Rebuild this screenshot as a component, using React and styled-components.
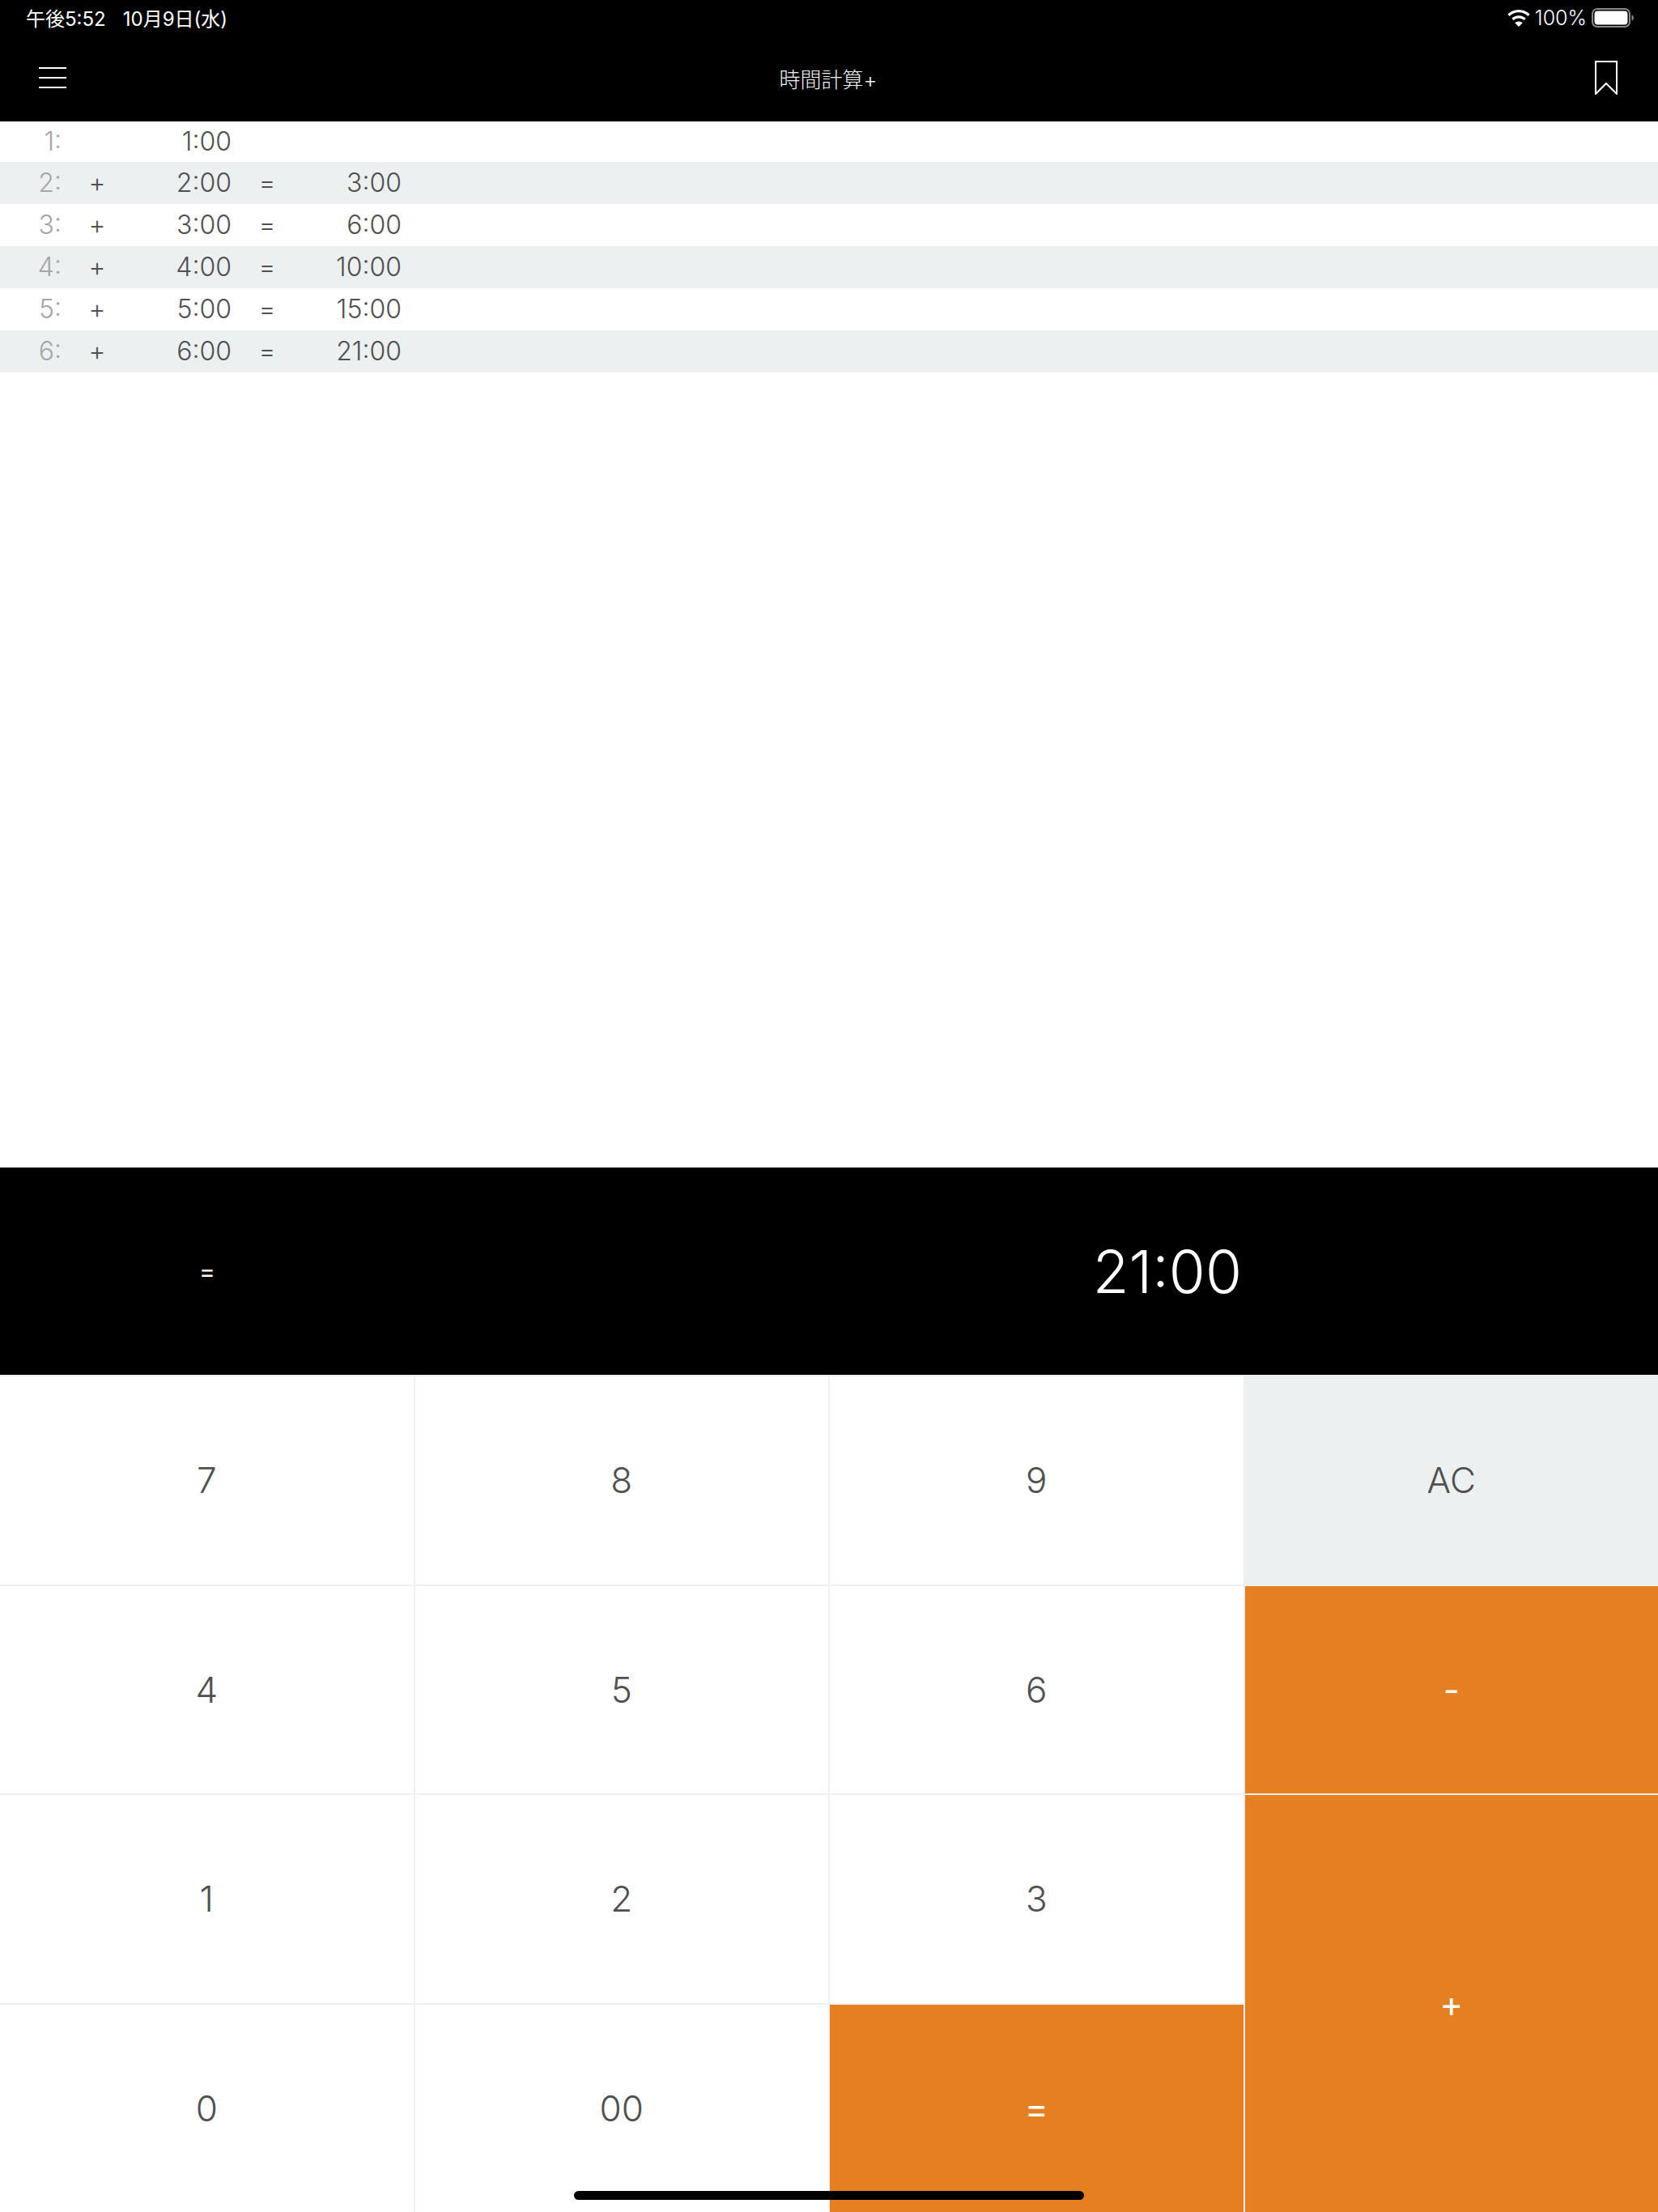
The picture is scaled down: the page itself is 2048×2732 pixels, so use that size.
import styled, { createGlobalStyle } from 'styled-components'

const GlobalStyle = createGlobalStyle`
    html, body {
        margin: 0;
        padding: 0;
        background: #ffffff;
    }
    * {
        box-sizing: border-box;
    }
`

const Page = styled.div`
    width: 2048px;
    height: 2732px;
    display: flex;
    flex-direction: column;
    position: relative;
    overflow: hidden;
    background: #ffffff;
    font-family: Inter, "Noto Sans CJK JP", sans-serif;
`

const Header = styled.header`
    height: 150px;
    background: #000000;
    color: #ffffff;
    display: flex;
    flex-direction: column;
`

const StatusBar = styled.div`
    height: 48px;
    padding: 0 30px 6px 32px;
    display: flex;
    align-items: center;
    justify-content: space-between;
    font-size: 24px;
`

const StatusLeft = styled.div`
    display: flex;
    gap: 21px;
    font-weight: 400;
`

const StatusRight = styled.div`
    display: flex;
    align-items: center;
    gap: 6px;
    padding-top: 2px;
    font-weight: 300;
    font-size: 25px;
`

const NavBar = styled.div`
    flex: 1;
    display: grid;
    grid-template-columns: 1fr auto 1fr;
    align-items: center;
    padding: 0 50px 6px 48px;
`

const Title = styled.div`
    font-size: 26px;
    font-weight: 300;
    color: #f2f2f2;
`

const NavRight = styled.div`
    display: flex;
    justify-content: flex-end;
`

const History = styled.div`
    flex: 1;
`

const Row = styled.div`
    height: 52px;
    padding-bottom: 2px;
    display: grid;
    grid-template-columns: 76px 88px 122px 88px 122px;
    align-items: center;
    font-size: 32px;
    font-weight: 300;
    color: #505050;
    background: ${(p) => (p.$alt ? '#ecf0f1' : '#ffffff')};
    &:first-child {
        height: 50px;
    }
`

const RowIndex = styled.span`
    text-align: right;
    color: #a6a6a6;
`

const RowOp = styled.span`
    text-align: center;
`

const RowValue = styled.span`
    text-align: right;
`

const Display = styled.div`
    height: 258px;
    background: #000000;
    border-top: 2px solid #ecf0f1;
    display: grid;
    grid-template-columns: 512px 1fr 512px;
    align-items: center;
    color: #ffffff;
`

const DisplayOp = styled.div`
    text-align: center;
    font-size: 30px;
`

const DisplayValue = styled.div`
    text-align: right;
    font-size: 73px;
    font-weight: 300;
    padding-right: 2px;
`

const Keypad = styled.div`
    height: 1034px;
    padding-top: 2px;
    display: grid;
    grid-template-columns: repeat(4, 1fr);
    grid-template-rows: repeat(4, 1fr);
    gap: 2px;
    background: #ecf0f1;
`

const Key = styled.div`
    display: flex;
    align-items: center;
    justify-content: center;
    font-size: 44px;
    font-weight: 300;
    color: #505050;
    background: #ffffff;
`

const ClearKey = styled(Key)`
    background: #ecf0f1;
`

const OrangeKey = styled(Key)`
    background: #e67e22;
    color: #ffffff;
    font-weight: 400;
    grid-row: span ${(p) => p.$rows || 1};
`

const HomeBar = styled.div`
    position: absolute;
    left: 709px;
    top: 2706px;
    width: 630px;
    height: 11px;
    border-radius: 6px;
    background: #000000;
`

const history = [
    { n: 1, v: '1:00' },
    { n: 2, v: '2:00', r: '3:00' },
    { n: 3, v: '3:00', r: '6:00' },
    { n: 4, v: '4:00', r: '10:00' },
    { n: 5, v: '5:00', r: '15:00' },
    { n: 6, v: '6:00', r: '21:00' },
]

const WifiIcon = () => (
    <svg width="28" height="21" viewBox="0 0 28 21" fill="#ffffff">
        <path d="M14 0C8.600 0 3.800 2.100.4 5.500l2.200 2.400C5.500 5 9.500 3.300 14 3.300s8.500 1.700 11.400 4.600l2.200-2.400C24.200 2.100 19.400 0 14 0z" />
        <path d="M14 7.200c-3.400 0-6.500 1.300-8.700 3.500l2.200 2.400c1.700-1.600 4-2.600 6.500-2.600s4.800 1 6.500 2.600l2.200-2.400c-2.200-2.200-5.300-3.500-8.700-3.500z" />
        <path d="M14 14.400c-1.900 0-3.500.7-4.700 1.900L14 21l4.700-4.700c-1.200-1.200-2.800-1.900-4.700-1.900z" />
    </svg>
)

const BatteryIcon = () => (
    <svg width="52" height="24" viewBox="0 0 52 24">
        <rect x="1" y="1" width="46" height="22" rx="6" fill="none" stroke="#8a8a8a" strokeWidth="2" />
        <rect x="3.500" y="3.500" width="41" height="17" rx="4" fill="#ffffff" />
        <path d="M49.500 8.500c1.500.6 2.500 2 2.500 3.500s-1 2.900-2.500 3.500z" fill="#8a8a8a" />
    </svg>
)

const MenuIcon = () => (
    <svg width="34" height="28" viewBox="0 0 34 28" stroke="#ffffff" strokeWidth="2">
        <path d="M0 2h34M0 14h34M0 26h34" />
    </svg>
)

const BookmarkIcon = () => (
    <svg width="28" height="42" viewBox="0 0 28 42" fill="none" stroke="#ffffff" strokeWidth="2">
        <path d="M1 1h26v40L14 28 1 41z" />
    </svg>
)

export default function App() {
    return (
        <>
            <GlobalStyle />
            <Page>
                <Header>
                    <StatusBar>
                        <StatusLeft>
                            <span>午後5:52</span>
                            <span>10月9日(水)</span>
                        </StatusLeft>
                        <StatusRight>
                            <WifiIcon />
                            <span>100%</span>
                            <BatteryIcon />
                        </StatusRight>
                    </StatusBar>
                    <NavBar>
                        <MenuIcon />
                        <Title>時間計算+</Title>
                        <NavRight>
                            <BookmarkIcon />
                        </NavRight>
                    </NavBar>
                </Header>
                <History>
                    {history.map((row, key) => (
                        <Row key={key} $alt={key % 2 === 1}>
                            <RowIndex>{row.n}:</RowIndex>
                            <RowOp>{row.r ? '+' : ''}</RowOp>
                            <RowValue>{row.v}</RowValue>
                            <RowOp>{row.r ? '=' : ''}</RowOp>
                            <RowValue>{row.r}</RowValue>
                        </Row>
                    ))}
                </History>
                <Display>
                    <DisplayOp>=</DisplayOp>
                    <DisplayValue>21:00</DisplayValue>
                </Display>
                <Keypad>
                    <Key>7</Key>
                    <Key>8</Key>
                    <Key>9</Key>
                    <ClearKey>AC</ClearKey>
                    <Key>4</Key>
                    <Key>5</Key>
                    <Key>6</Key>
                    <OrangeKey>-</OrangeKey>
                    <Key>1</Key>
                    <Key>2</Key>
                    <Key>3</Key>
                    <OrangeKey $rows={2}>+</OrangeKey>
                    <Key>0</Key>
                    <Key>00</Key>
                    <OrangeKey>=</OrangeKey>
                </Keypad>
                <HomeBar />
            </Page>
        </>
    )
}
